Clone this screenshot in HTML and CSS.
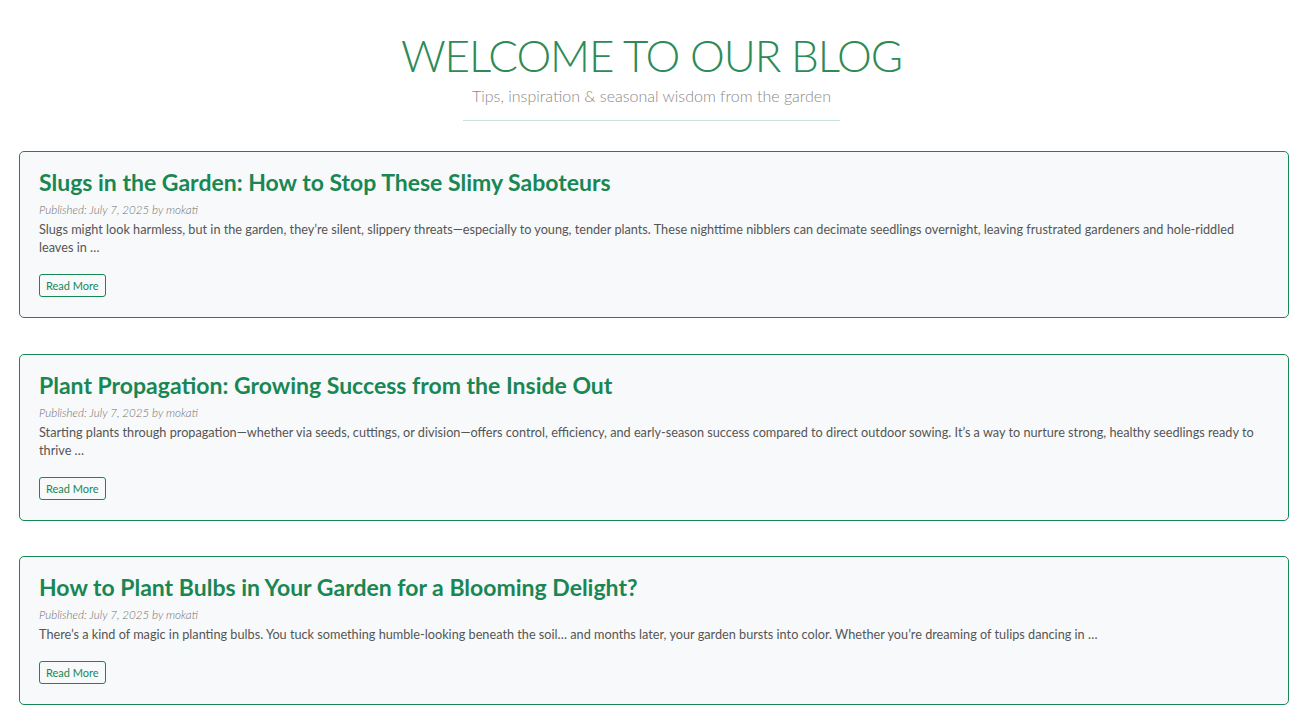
FILE: index.html
```html
<!DOCTYPE html>
<html lang="en">
<head>
<meta charset="utf-8">
<title>Blog</title>
<link rel="stylesheet" href="styles.css">
</head>
<body>
<header class="blog-header">
  <h1 class="blog-title">WELCOME TO OUR BLOG</h1>
  <p class="blog-subtitle">Tips, inspiration &amp; seasonal wisdom from the garden</p>
  <div class="blog-divider"></div>
</header>
<main class="posts">
  <article class="post-card">
    <h2 class="post-title">Slugs in the Garden: How to Stop These Slimy Saboteurs</h2>
    <p class="post-meta">Published: July 7, 2025 by mokati</p>
    <p class="post-excerpt">Slugs might look harmless, but in the garden, they’re silent, slippery threats—especially to young, tender plants. These nighttime nibblers can decimate seedlings overnight, leaving frustrated gardeners and hole-riddled leaves in …</p>
    <a class="read-more" href="#">Read More</a>
  </article>
  <article class="post-card">
    <h2 class="post-title">Plant Propagation: Growing Success from the Inside Out</h2>
    <p class="post-meta">Published: July 7, 2025 by mokati</p>
    <p class="post-excerpt">Starting plants through propagation—whether via seeds, cuttings, or division—offers control, efficiency, and early-season success compared to direct outdoor sowing. It’s a way to nurture strong, healthy seedlings ready to thrive …</p>
    <a class="read-more" href="#">Read More</a>
  </article>
  <article class="post-card">
    <h2 class="post-title">How to Plant Bulbs in Your Garden for a Blooming Delight?</h2>
    <p class="post-meta">Published: July 7, 2025 by mokati</p>
    <p class="post-excerpt">There’s a kind of magic in planting bulbs. You tuck something humble-looking beneath the soil… and months later, your garden bursts into color. Whether you’re dreaming of tulips dancing in …</p>
    <a class="read-more" href="#">Read More</a>
  </article>
</main>
</body>
</html>
```
FILE: styles.css
```css
* { box-sizing: border-box; }
body {
  margin: 0;
  background: #ffffff;
  font-family: "Lato", "Open Sans", sans-serif;
  color: #555555;
}
.blog-header {
  display: flex;
  flex-direction: column;
  align-items: center;
  padding-top: 29px;
}
.blog-title {
  margin: 0;
  font-size: 44px;
  font-weight: 300;
  line-height: 52px;
  color: #2e8b57;
  letter-spacing: -1.1px;
}
.blog-subtitle {
  margin: 5px 0 0;
  font-size: 16px;
  font-weight: 300;
  line-height: 20px;
  color: #8a8a8a;
}
.blog-divider {
  width: 377px;
  height: 1px;
  margin-top: 14px;
  background: #c9e3da;
}
.posts {
  display: flex;
  flex-direction: column;
  gap: 35.5px;
  margin: 30px 14px 13px 19px;
}
.post-card {
  background: #f8f9fa;
  border: 1px solid #198754;
  border-radius: 5px;
  padding: 16px 19px 20px;
}
.post-title {
  margin: 0;
  font-size: 23px;
  font-weight: 700;
  line-height: 28px;
  color: #198754;
}
.post-meta {
  margin: 7px 0 0;
  font-size: 11.6px;
  font-style: italic;
  font-weight: 300;
  line-height: 14px;
  color: #6f6f6f;
}
.post-excerpt {
  margin: 3px 0 0;
  font-size: 12.7px;
  line-height: 18px;
  color: #555555;
}
.read-more {
  display: inline-block;
  margin-top: 18px;
  padding: 4px 6px;
  font-size: 11px;
  line-height: 13px;
  color: #198754;
  text-decoration: none;
  border: 1px solid #198754;
  border-radius: 3px;
}
```
